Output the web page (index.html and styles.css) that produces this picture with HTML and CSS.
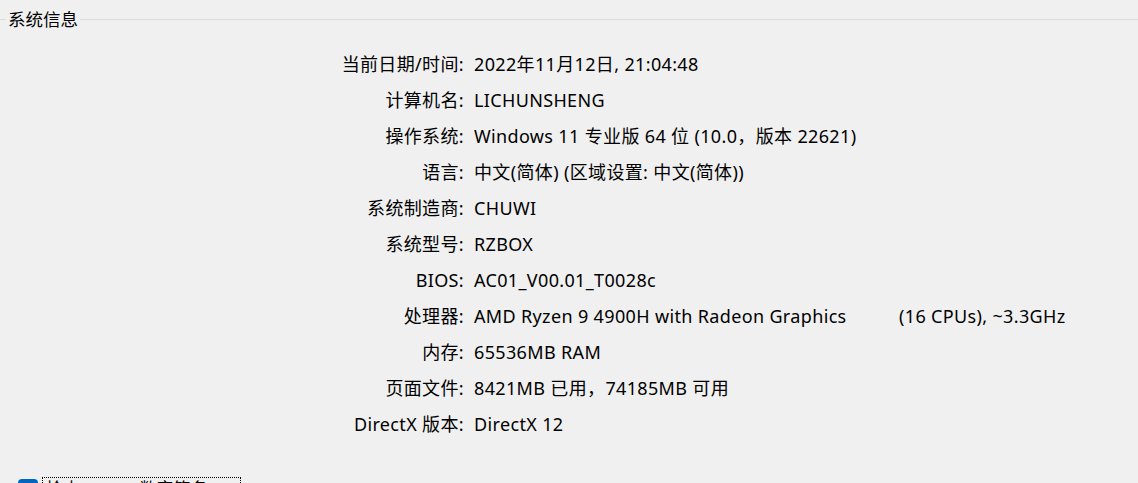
FILE: index.html
```html
<!DOCTYPE html>
<html lang="zh-CN">
<head>
<meta charset="utf-8">
<link rel="stylesheet" href="styles.css">
</head>
<body>
<div class="page">
  <div class="group-head">
    <span class="line line-left"></span>
    <span class="group-title">系统信息</span>
    <span class="line line-right"></span>
  </div>
  <div class="info">
    <div class="label">当前日期/时间:</div><div class="value">2022年11月12日, 21:04:48</div>
    <div class="label">计算机名:</div><div class="value">LICHUNSHENG</div>
    <div class="label">操作系统:</div><div class="value">Windows 11 专业版 64 位 (10.0，版本 22621)</div>
    <div class="label">语言:</div><div class="value">中文(简体) (区域设置: 中文(简体))</div>
    <div class="label">系统制造商:</div><div class="value">CHUWI</div>
    <div class="label">系统型号:</div><div class="value">RZBOX</div>
    <div class="label">BIOS:</div><div class="value">AC01_V00.01_T0028c</div>
    <div class="label">处理器:</div><div class="value"><span class="cpu-name">AMD Ryzen 9 4900H with Radeon Graphics</span><span>(16 CPUs), ~3.3GHz</span></div>
    <div class="label">内存:</div><div class="value">65536MB RAM</div>
    <div class="label">页面文件:</div><div class="value">8421MB 已用，74185MB 可用</div>
    <div class="label">DirectX 版本:</div><div class="value">DirectX 12</div>
  </div>
  <div class="check-row">
    <span class="checkbox"></span>
    <span class="check-label">检查 WHQL 数字签名(C)</span>
  </div>
</div>
</body>
</html>
```
FILE: styles.css
```css
html, body {
  margin: 0;
  padding: 0;
  background: #f0f0f0;
  overflow: hidden;
}
body {
  font-family: "Noto Sans", "Noto Sans CJK SC", sans-serif;
  color: #000;
  font-size: 18px;
}
.page {
  width: 1138px;
  height: 483px;
  overflow: hidden;
}
.group-head {
  display: flex;
  align-items: center;
  height: 38px;
}
.line {
  height: 1px;
  background: #dcdcdc;
}
.line-left {
  width: 6px;
}
.line-right {
  flex: 1;
}
.group-title {
  font-size: 17.5px;
  padding: 0 2px;
  line-height: 20px;
  font-family: "Noto Sans CJK SC", sans-serif;
}
.info {
  display: grid;
  grid-template-columns: 464px auto;
  column-gap: 10px;
  grid-auto-rows: 36px;
  padding-top: 8px;
  line-height: 36px;
  letter-spacing: 0.35px;
}
.label {
  text-align: right;
  white-space: nowrap;
}
.value {
  white-space: nowrap;
}
.cpu-name {
  display: inline-block;
  width: 425px;
}
.check-row {
  display: flex;
  align-items: flex-start;
  margin-top: 35px;
  padding-left: 18px;
}
.checkbox {
  width: 20px;
  height: 20px;
  border-radius: 4px;
  background: #0067c0;
  margin-top: 2px;
}
.check-label {
  margin-left: 4px;
  width: 199px;
  height: 22px;
  border: 1px dotted #000;
  padding-left: 3px;
  font-size: 17px;
  line-height: 22px;
  box-sizing: border-box;
}
```
